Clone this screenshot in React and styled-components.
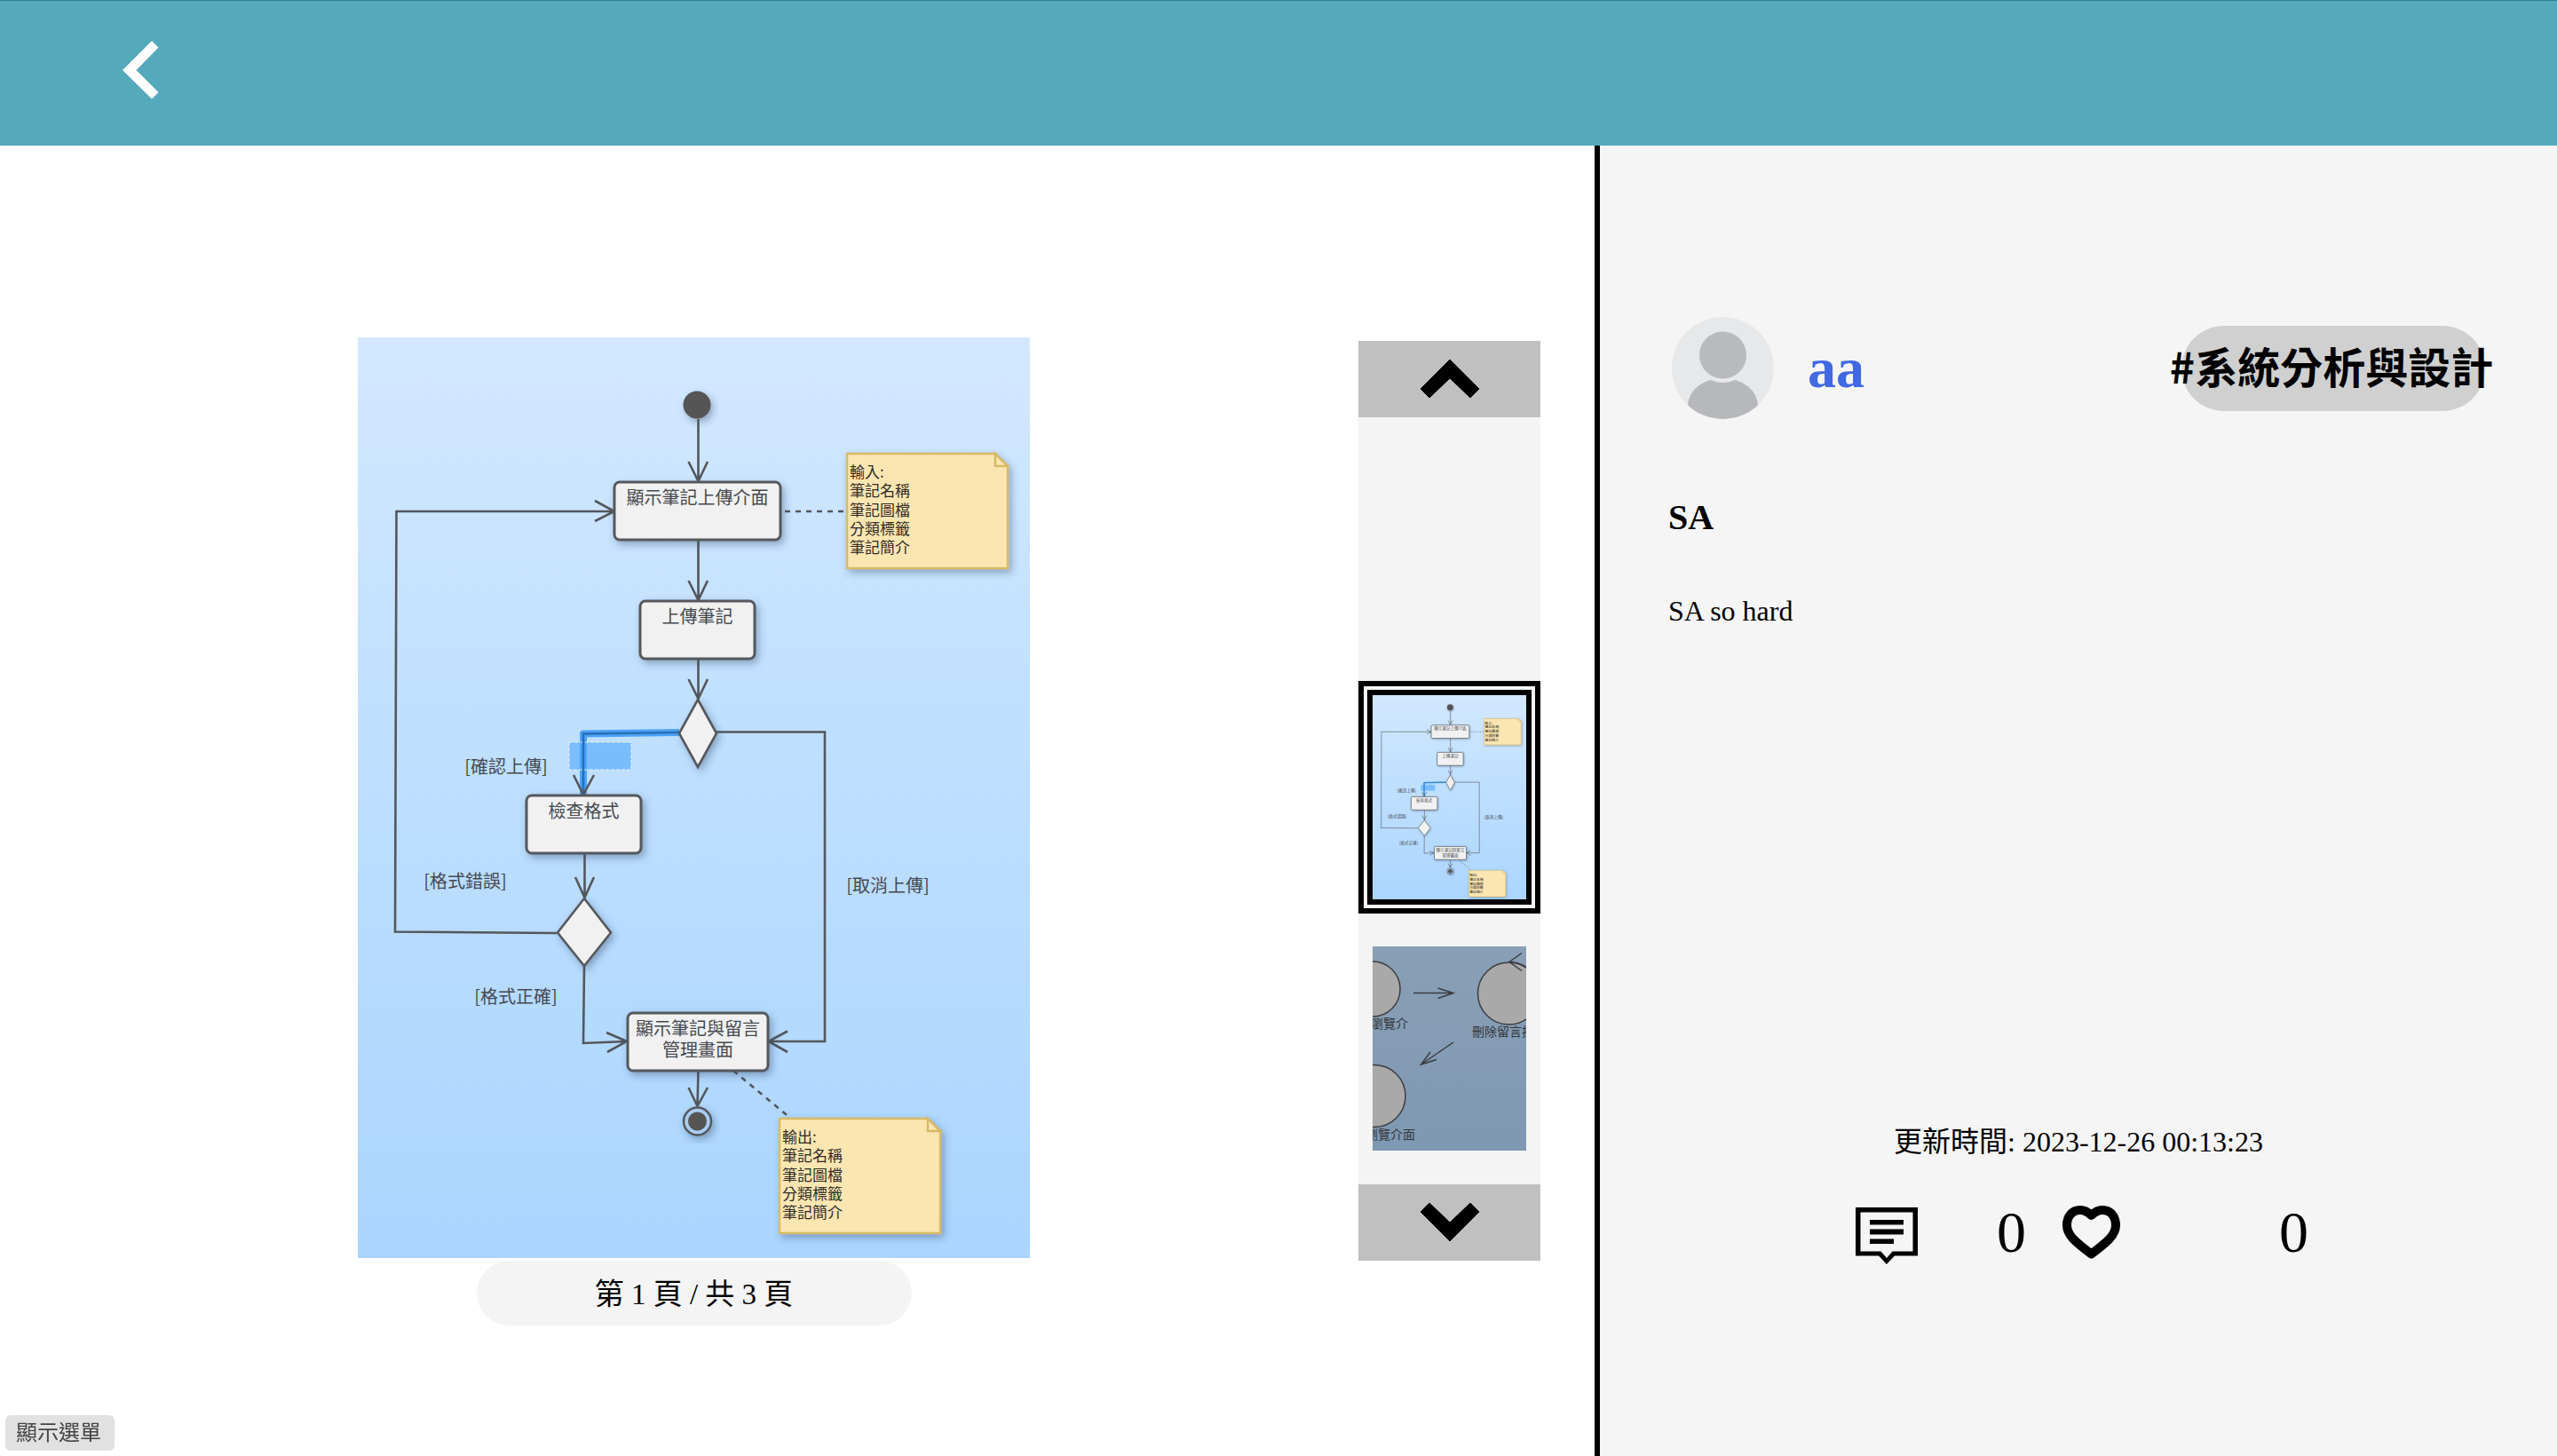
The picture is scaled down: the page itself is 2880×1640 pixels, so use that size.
import React, { useState } from "react";
import styled, { createGlobalStyle } from "styled-components";

const serif = `"Liberation Serif", "Noto Sans CJK TC", serif`;
const sans = `"Noto Sans CJK TC", sans-serif`;

const GlobalStyle = createGlobalStyle`
  *, *::before, *::after { box-sizing: border-box; }
  body { margin: 0; background: #fff; color: #000; font-family: ${serif}; font-size: 32px; line-height: 36px; }
  button { border: 0; padding: 0; background: none; font: inherit; color: inherit; cursor: pointer; }
  svg { display: block; }
`;

const Page = styled.div`
  display: flex;
  flex-direction: column;
  min-height: 100vh;
`;

const Header = styled.header`
  display: flex;
  align-items: flex-start;
  height: 164px;
  padding: 45px 138px;
  border-top: 1px solid #2f8095;
  background: #54a9bb;
`;

const Content = styled.div`
  display: grid;
  grid-template-columns: minmax(0, 1fr) 1084px;
  flex: 1;
`;

const Viewer = styled.main`
  display: flex;
  align-items: flex-start;
  padding: 216px 61px 80px 33px;
`;

const Stage = styled.section`
  flex: 1;
  display: flex;
  flex-direction: column;
  align-items: center;
  gap: 3px;
`;

const StageImage = styled.div`
  width: 757px;
`;

const PageCount = styled.p`
  margin: 0;
  width: 490px;
  padding: 20px 0 17px;
  border-radius: 37px;
  background: #f4f4f4;
  font-size: 33px;
  text-align: center;
`;

const Strip = styled.nav`
  display: flex;
  flex-direction: column;
  width: 205px;
  margin-top: 4px;
  background: #f4f4f4;
`;

const StripButton = styled.button`
  display: flex;
  align-items: center;
  justify-content: center;
  height: 86px;
  background: #c0c0c0;
`;

const StripList = styled.div`
  display: flex;
  flex-direction: column;
  justify-content: flex-end;
  gap: 21px;
  height: 864px;
  padding-bottom: 22px;
`;

const Thumb = styled.button`
  padding: 4px;
  border: 6px solid ${(p) => (p.$active ? "#000" : "transparent")};
`;

const ThumbFrame = styled.span`
  display: block;
  height: 242px;
  border: 6px solid ${(p) => (p.$active ? "#000" : "transparent")};
`;

const Sidebar = styled.aside`
  display: flex;
  flex-direction: column;
  padding: 193px 77px 216px;
  border-left: 6px solid #000;
  background: #f5f5f5;
`;

const Profile = styled.div`
  display: flex;
  align-items: center;
  gap: 38px;
  padding: 0 4px;
`;

const Author = styled.a`
  color: #4169e1;
  font-size: 64px;
  line-height: 72px;
  font-weight: 700;
  text-decoration: none;
`;

const Tag = styled.div`
  display: flex;
  align-items: center;
  justify-content: center;
  width: 342px;
  height: 96px;
  margin-left: auto;
  padding: 0 4px 8px 0;
  border-radius: 48px;
  background: #d0d0d0;
  font: 700 48px/72px ${sans};
  white-space: nowrap;
`;

const Title = styled.h1`
  margin: 88px 0 64px;
  font-size: 40px;
  line-height: 46px;
`;

const Description = styled.p`
  margin: 0;
`;

const Footer = styled.footer`
  display: flex;
  flex-direction: column;
  align-items: center;
  gap: 48px;
  margin-top: auto;
`;

const Actions = styled.div`
  display: flex;
  gap: 41px;
`;

const Action = styled.button`
  display: flex;
  align-items: center;
  justify-content: space-between;
  width: ${(p) => p.$width}px;
  height: 72px;
  font-size: 66px;
  line-height: 70px;
`;

const MenuHint = styled.button`
  position: fixed;
  left: 6px;
  bottom: 6px;
  height: 40px;
  padding: 0 15px 0 12px;
  border-radius: 6px;
  background: #e1e1e1;
  color: #444;
  font: 24px/36px ${sans};
  display: flex;
`;

const Drawing = styled.svg`
  width: 100%;
  height: ${(p) => (p.$fill ? "100%" : "auto")};
`;

const Label = styled.text`
  font-family: ${sans};
  font-size: ${(p) => p.$size}px;
  fill: ${(p) => p.$ink || "#454a50"};
`;

function Note({ x, y, lines }) {
  return (
    <g transform={`translate(${x} ${y})`}>
      <g filter="url(#shade)" fill="#fbe6b2" stroke="#d8ba66" strokeWidth="2.500">
        <path d="M0 0H167L181 14V129H0Z" />
        <path d="M167 0V14H181Z" />
      </g>
      {lines.map((line, i) => (
        <Label key={line} $size={17} $ink="#2f2c26" x="3" y={27 + Math.round(i * 21.3)}>
          {line}
        </Label>
      ))}
    </g>
  );
}

const boxes = [
  { x: 289, y: 163, w: 187, lines: ["顯示筆記上傳介面"] },
  { x: 318, y: 297, w: 129, lines: ["上傳筆記"] },
  { x: 190, y: 516, w: 129, lines: ["檢查格式"] },
  { x: 304, y: 761, w: 158, lines: ["顯示筆記與留言", "管理畫面"] },
];

const guards = [
  { x: 167, y: 491, text: "[確認上傳]" },
  { x: 121, y: 620, text: "[格式錯誤]" },
  { x: 597, y: 625, text: "[取消上傳]" },
  { x: 178, y: 750, text: "[格式正確]" },
];

const noteLines = ["筆記名稱", "筆記圖檔", "分類標籤", "筆記簡介"];

function ActivityDiagram({ fill }) {
  return (
    <Drawing
      $fill={fill}
      viewBox="0 0 757 1037"
      preserveAspectRatio="xMidYMid slice"
      role="img"
      aria-label="SA"
    >
      <defs>
        <linearGradient id="sky" x1="0" y1="0" x2="0" y2="1">
          <stop offset="0" stopColor="#d3e8ff" />
          <stop offset="0.4" stopColor="#c1e0ff" />
          <stop offset="1" stopColor="#aad5ff" />
        </linearGradient>
        <filter id="shade" x="-20%" y="-20%" width="150%" height="150%">
          <feDropShadow dx="3" dy="4" stdDeviation="4" floodColor="#30465f" floodOpacity="0.4" />
        </filter>
      </defs>
      <rect width="757" height="1037" fill="url(#sky)" />

      <circle cx="382" cy="76" r="15.5" fill="#555" filter="url(#shade)" />

      <path d="M362 445L254 446.500V515" fill="none" stroke="#4ba3f8" strokeWidth="8" strokeLinejoin="round" />
      <rect x="238" y="456" width="70" height="31" fill="#4da6ff" fillOpacity="0.6" stroke="#e3f1ff" strokeDasharray="4 2" />

      <g fill="none" stroke="#53575c" strokeWidth="2.600">
        <path d="M383.500 92V162M372.500 140L383.500 162L394 140" />
        <path d="M383.500 228V296M372.500 274L383.500 296L394 274" />
        <path d="M383.500 362V407M372.500 385L383.500 407L394 385" />
        <path d="M404 444.500H526V793H463M484 781.500L462.500 793L484 805" />
        <path d="M362 445L254 446.500V515" stroke="#2a6fb4" />
        <path d="M243 493L254 515L266 493" />
        <path d="M255.500 581V631M245 608L255.500 631L266 608" />
        <path d="M224 671L42 669.500L43.500 196H288M267 184L289 196L267 207" />
        <path d="M255 708L254 795L303 793M280 783L303 793L281 805" />
        <path d="M383.500 826L382.500 866M372.500 845L382.500 866L394 845" />
        <path d="M481 196H551" strokeDasharray="6 6" />
        <path d="M423 826L488 880" strokeDasharray="6 6" />
      </g>

      {boxes.map((b) => (
        <g key={b.y}>
          <rect x={b.x} y={b.y} width={b.w} height="65" rx="6" fill="#f1f1f1" stroke="#55585c" strokeWidth="3" filter="url(#shade)" />
          {b.lines.map((line, i) => (
            <Label key={line} $size={20} textAnchor="middle" x={b.x + b.w / 2} y={b.y + 25 + i * 24}>
              {line}
            </Label>
          ))}
        </g>
      ))}

      <g fill="#f1f1f1" stroke="#55585c" strokeWidth="2.600" filter="url(#shade)">
        <path d="M383 408L404 446L383 484L362 446Z" />
        <path d="M255 632L285 670.500L255 708L225 670.500Z" />
      </g>

      <g filter="url(#shade)">
        <circle cx="382.500" cy="883" r="15.500" fill="#a9cdf3" stroke="#55585c" strokeWidth="2.500" />
        <circle cx="382.500" cy="883" r="10.500" fill="#555" />
      </g>

      {guards.map((g) => (
        <Label key={g.text} $size={20} textAnchor="middle" x={g.x} y={g.y}>
          {g.text}
        </Label>
      ))}

      <Note x={551} y={131} lines={["輸入:", ...noteLines]} />
      <Note x={475} y={880} lines={["輸出:", ...noteLines]} />
    </Drawing>
  );
}

function RobustnessDiagram() {
  return (
    <Drawing $fill viewBox="0 0 173 230" preserveAspectRatio="xMidYMid slice" role="img" aria-label="SA">
      <defs>
        <linearGradient id="dusk" x1="0" y1="0" x2="0" y2="1">
          <stop offset="0" stopColor="#8a9fb5" />
          <stop offset="1" stopColor="#7e98b3" />
        </linearGradient>
      </defs>
      <rect width="173" height="230" fill="url(#dusk)" />
      <g fill="#a9a9a9" stroke="#3b3d40" strokeWidth="1.500">
        <circle cx="0" cy="48" r="31" />
        <circle cx="153.500" cy="53" r="35" />
        <circle cx="2" cy="168.500" r="35" />
      </g>
      <g fill="none" stroke="#3b3d40" strokeWidth="1.500">
        <path d="M46 52.500H91M73.500 47L91 52.500L73.500 58.500" />
        <path d="M91 108L54.500 133M65 119L54.500 133L72 127.500" />
        <path d="M168 7.500L154 17.500L168 27.500M154 17.500Q164 18 173 23" />
      </g>
      <Label $size={14} $ink="#33363a" textAnchor="end" x="40" y="92">瀏覽介</Label>
      <Label $size={14} $ink="#33363a" x="112" y="101">刪除留言按</Label>
      <Label $size={14} $ink="#33363a" textAnchor="end" x="48" y="217">瀏覽介面</Label>
    </Drawing>
  );
}

function Chevron({ down }) {
  return (
    <svg width="68" height="46" viewBox="0 0 68 46" aria-hidden="true">
      <path
        d={down ? "M1 11L11 1L34 23L57 1L67 11L34 44Z" : "M1 34L34 1L67 34L57 44L34 22L11 44Z"}
        stroke="#000"
        strokeLinejoin="round"
      />
    </svg>
  );
}

function Avatar() {
  return (
    <svg width="115" height="115" viewBox="0 0 115 115" aria-hidden="true">
      <clipPath id="round"><circle cx="57.500" cy="57.500" r="57.500" /></clipPath>
      <g clipPath="url(#round)">
        <rect width="115" height="115" fill="#e7e8ea" />
        <path d="M18 115V100A39.500 31 0 0 1 97 100V115Z" fill="#b7b8bb" />
        <circle cx="57.500" cy="43" r="31" fill="#e7e8ea" />
        <circle cx="57.500" cy="43" r="26.500" fill="#b9babd" />
      </g>
    </svg>
  );
}

function CommentIcon() {
  return (
    <svg width="78" height="72" viewBox="0 0 78 72" aria-hidden="true">
      <path fillRule="evenodd" d="M8 8H78V62.500H52L43 72L34 62.500H8ZM13.500 13.500V57.500H36.500L43 65L49.500 57.500H72.500V13.500Z" />
      <path d="M24 22H62V27.500H24ZM24 32.500H62V38.500H24ZM24 43.500H51V49H24Z" />
    </svg>
  );
}

function HeartIcon() {
  return (
    <svg width="65" height="72" viewBox="0 0 65 72" aria-hidden="true">
      <path
        d="M32.500 17C28.500 13 24.500 11 20 11C11 11 5 18 5 28C5 39 14 46.500 32.500 60.500C51 46.500 60 39 60 28C60 18 54 11 45 11C40.500 11 36.500 13 32.500 17Z"
        fill="none"
        stroke="#000"
        strokeWidth="10"
        strokeLinejoin="round"
      />
    </svg>
  );
}

export default function App() {
  const [page, setPage] = useState(1);
  return (
    <Page>
      <GlobalStyle />
      <Header>
        <button type="button" aria-label="返回">
          <svg width="41" height="66" viewBox="0 0 41 66" aria-hidden="true">
            <path d="M33 0L40.500 7.500L15.500 33L40.500 58L33 65.500L0 33Z" fill="#fff" />
          </svg>
        </button>
      </Header>
      <Content>
        <Viewer>
          <Stage>
            <StageImage>{page === 1 ? <ActivityDiagram /> : <RobustnessDiagram />}</StageImage>
            <PageCount>第 {page} 頁 / 共 3 頁</PageCount>
          </Stage>
          <Strip aria-label="頁面">
            <StripButton type="button" aria-label="上一頁" onClick={() => setPage(1)}>
              <Chevron />
            </StripButton>
            <StripList>
              <Thumb type="button" $active={page === 1} onClick={() => setPage(1)}>
                <ThumbFrame $active={page === 1}><ActivityDiagram fill /></ThumbFrame>
              </Thumb>
              <Thumb type="button" $active={page === 2} onClick={() => setPage(2)}>
                <ThumbFrame $active={page === 2}><RobustnessDiagram /></ThumbFrame>
              </Thumb>
            </StripList>
            <StripButton type="button" aria-label="下一頁" onClick={() => setPage(2)}>
              <Chevron down />
            </StripButton>
          </Strip>
        </Viewer>
        <Sidebar>
          <Profile>
            <Avatar />
            <Author href="#aa">aa</Author>
            <Tag>#系統分析與設計</Tag>
          </Profile>
          <Title>SA</Title>
          <Description>SA so hard</Description>
          <Footer>
            <time dateTime="2023-12-26T00:13:23">更新時間: 2023-12-26 00:13:23</time>
            <Actions>
              <Action type="button" $width={200}><CommentIcon />0</Action>
              <Action type="button" $width={277}><HeartIcon />0</Action>
            </Actions>
          </Footer>
        </Sidebar>
      </Content>
      <MenuHint type="button">顯示選單</MenuHint>
    </Page>
  );
}
